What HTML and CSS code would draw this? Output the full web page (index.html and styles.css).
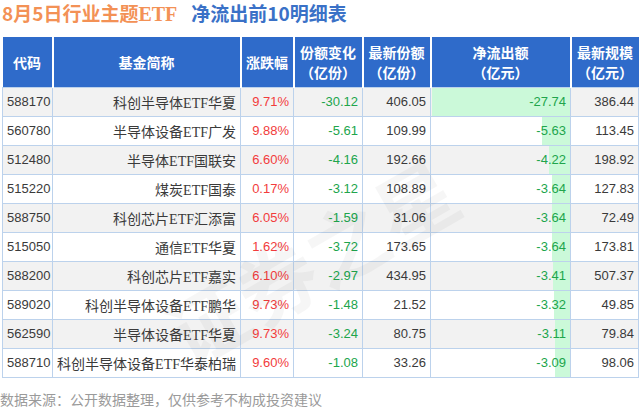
FILE: index.html
```html
<!DOCTYPE html>
<html lang="zh-CN">
<head>
<meta charset="utf-8">
<title>8月5日行业主题ETF净流出前10明细表</title>
<link rel="stylesheet" href="styles.css">
</head>
<body>
<div class="page">
  <h1 class="title"><span class="t-orange">8月5日行业主题<span class="lat">ETF</span></span><span class="t-blue">净流出前10明细表</span></h1>
  <table class="grid">
    <colgroup>
      <col class="c1"><col class="c2"><col class="c3"><col class="c4"><col class="c5"><col class="c6"><col class="c7">
    </colgroup>
    <thead>
      <tr>
        <th>代码</th>
        <th>基金简称</th>
        <th>涨跌幅</th>
        <th>份额变化<br>（亿份）</th>
        <th>最新份额<br>（亿份）</th>
        <th>净流出额<br>（亿元）</th>
        <th>最新规模<br>（亿元）</th>
      </tr>
    </thead>
    <tbody>
      <tr><td class="code">588170</td><td class="name">科创半导体<span class="lat">ETF</span>华夏</td><td class="up">9.71%</td><td class="dn">-30.12</td><td class="num">406.05</td><td class="flow"><span class="bar" style="width:138px"></span><span class="val">-27.74</span></td><td class="num">386.44</td></tr>
      <tr><td class="code">560780</td><td class="name">半导体设备<span class="lat">ETF</span>广发</td><td class="up">9.88%</td><td class="dn">-5.61</td><td class="num">109.99</td><td class="flow"><span class="bar" style="width:28px"></span><span class="val">-5.63</span></td><td class="num">113.45</td></tr>
      <tr><td class="code">512480</td><td class="name">半导体<span class="lat">ETF</span>国联安</td><td class="up">6.60%</td><td class="dn">-4.16</td><td class="num">192.66</td><td class="flow"><span class="bar" style="width:21px"></span><span class="val">-4.22</span></td><td class="num">198.92</td></tr>
      <tr><td class="code">515220</td><td class="name">煤炭<span class="lat">ETF</span>国泰</td><td class="up">0.17%</td><td class="dn">-3.12</td><td class="num">108.89</td><td class="flow"><span class="bar" style="width:18px"></span><span class="val">-3.64</span></td><td class="num">127.83</td></tr>
      <tr><td class="code">588750</td><td class="name">科创芯片<span class="lat">ETF</span>汇添富</td><td class="up">6.05%</td><td class="dn">-1.59</td><td class="num">31.06</td><td class="flow"><span class="bar" style="width:18px"></span><span class="val">-3.64</span></td><td class="num">72.49</td></tr>
      <tr><td class="code">515050</td><td class="name">通信<span class="lat">ETF</span>华夏</td><td class="up">1.62%</td><td class="dn">-3.72</td><td class="num">173.65</td><td class="flow"><span class="bar" style="width:18px"></span><span class="val">-3.64</span></td><td class="num">173.81</td></tr>
      <tr><td class="code">588200</td><td class="name">科创芯片<span class="lat">ETF</span>嘉实</td><td class="up">6.10%</td><td class="dn">-2.97</td><td class="num">434.95</td><td class="flow"><span class="bar" style="width:17px"></span><span class="val">-3.41</span></td><td class="num">507.37</td></tr>
      <tr><td class="code">589020</td><td class="name">科创半导体设备<span class="lat">ETF</span>鹏华</td><td class="up">9.73%</td><td class="dn">-1.48</td><td class="num">21.52</td><td class="flow"><span class="bar" style="width:16.5px"></span><span class="val">-3.32</span></td><td class="num">49.85</td></tr>
      <tr><td class="code">562590</td><td class="name">半导体设备<span class="lat">ETF</span>华夏</td><td class="up">9.73%</td><td class="dn">-3.24</td><td class="num">80.75</td><td class="flow"><span class="bar" style="width:15.5px"></span><span class="val">-3.11</span></td><td class="num">79.84</td></tr>
      <tr><td class="code">588710</td><td class="name">科创半导体设备<span class="lat">ETF</span>华泰柏瑞</td><td class="up">9.60%</td><td class="dn">-1.08</td><td class="num">33.26</td><td class="flow"><span class="bar" style="width:15.3px"></span><span class="val">-3.09</span></td><td class="num">98.06</td></tr>
    </tbody>
  </table>
  <p class="source">数据来源：公开数据整理，仅供参考不构成投资建议</p>
  <div class="wm" aria-hidden="true">证券之星</div>
</div>
</body>
</html>
```

FILE: styles.css
```css
html, body {
  margin: 0;
  padding: 0;
  background: #ffffff;
}

.page {
  position: relative;
  width: 640px;
  height: 410px;
  overflow: hidden;
  padding: 0 2px;
  box-sizing: border-box;
  font-family: "Liberation Sans", "Noto Sans CJK SC", sans-serif;
}

.title {
  margin: 0;
  height: 26px;
  line-height: 26px;
  font-size: 19px;
  font-weight: bold;
  font-family: "Noto Sans CJK SC", sans-serif;
  white-space: nowrap;
  display: flex;
  gap: 14px;
}

.title .lat {
  font-family: "Liberation Serif", serif;
  font-size: 20px;
}

.t-orange { color: #f39155; }
.t-blue { color: #3a71c7; }

.grid {
  margin-top: 11px;
  width: 636px;
  border-collapse: collapse;
  table-layout: fixed;
  position: relative;
  z-index: 1;
}

.c1 { width: 50px; }
.c2 { width: 188px; }
.c3 { width: 53px; }
.c4 { width: 69px; }
.c5 { width: 68px; }
.c6 { width: 140px; }
.c7 { width: 68px; }

.grid th {
  height: 50px;
  padding: 0 2px;
  box-sizing: border-box;
  background: #2f6bca;
  color: #ffffff;
  font-family: "Noto Sans CJK SC", sans-serif;
  font-size: 14px;
  font-weight: bold;
  line-height: 20px;
  text-align: center;
  vertical-align: middle;
  border-left: 2px solid #ffffff;
  border-right: 2px solid #ffffff;
}

.grid th:first-child { border-left: 0; }
.grid th:last-child { border-right: 0; }

.grid td {
  height: 29px;
  padding: 0 4px;
  box-sizing: border-box;
  border: 1px solid #bcd2ec;
  font-size: 13px;
  color: #3a3a3a;
  text-align: right;
  white-space: nowrap;
  vertical-align: middle;
}

.grid tbody tr:nth-child(odd) td { background: rgba(240, 240, 240, 0.85); }
.grid tbody tr:nth-child(even) td { background: rgba(255, 255, 255, 0.85); }

.grid td.code { text-align: left; }

.grid td.name {
  font-family: "Noto Sans CJK SC", sans-serif;
  font-size: 14px;
}

.grid td.name .lat {
  font-family: "Liberation Serif", serif;
  font-size: 14px;
}

.grid td.up { color: #f23c3c; }
.grid td.dn { color: #20a54c; }

.grid td.flow {
  position: relative;
  color: #20a54c;
}

.grid tbody tr td.flow .bar {
  position: absolute;
  top: 0;
  right: 0;
  bottom: 0;
  background: #cbf9d9;
}

.grid td.flow .val {
  position: relative;
}

.source {
  margin: 0;
  padding-top: 11px;
  line-height: 20px;
  font-family: "Noto Sans CJK SC", sans-serif;
  font-size: 14px;
  color: #9a9a9a;
  margin-left: -2px;
  white-space: nowrap;
}

.wm {
  position: absolute;
  left: 150px;
  top: 215px;
  font-family: "Noto Sans CJK SC", sans-serif;
  font-weight: bold;
  font-size: 80px;
  line-height: 90px;
  color: rgba(0, 0, 0, 0.035);
  white-space: nowrap;
  pointer-events: none;
  transform: rotate(-30deg);
  z-index: 2;
}
```
